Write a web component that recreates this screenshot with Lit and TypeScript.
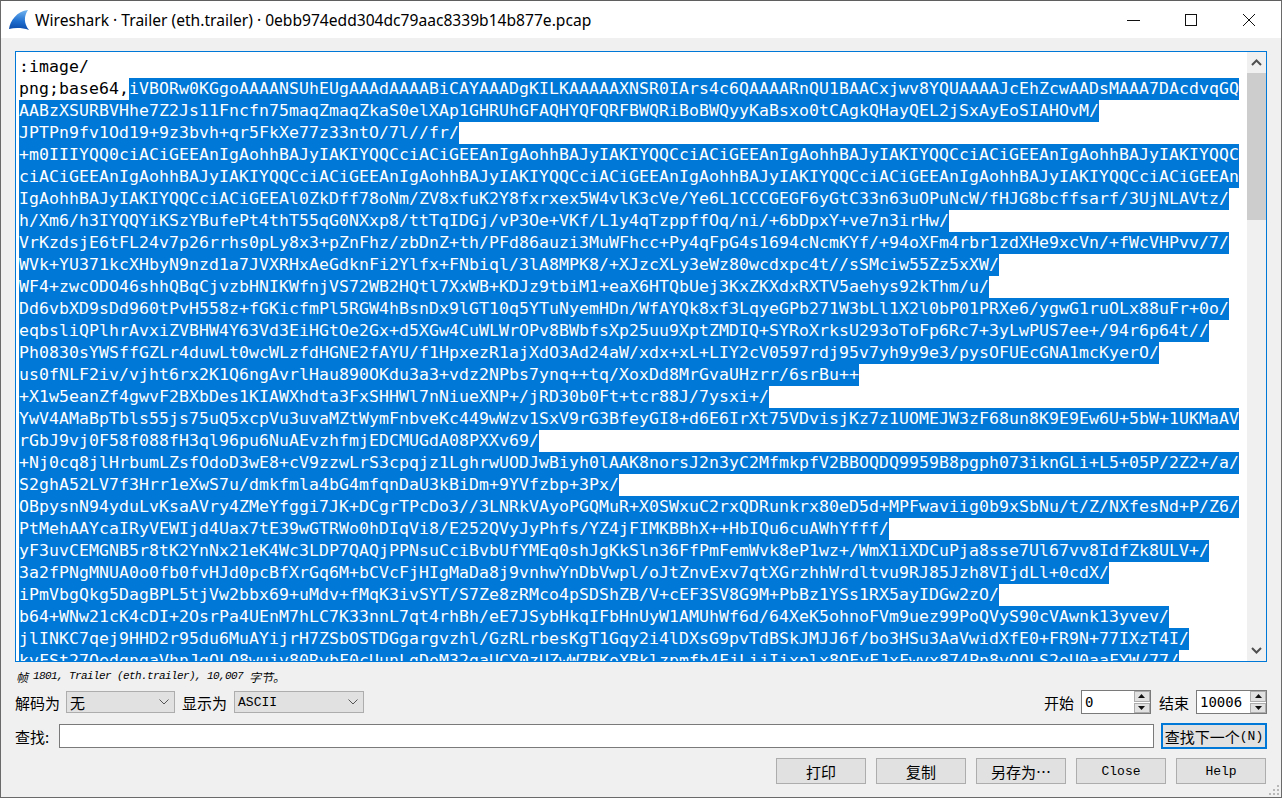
import { LitElement, html, css } from "lit";
import { customElement } from "lit/decorators.js";

const PLAIN_1 = ":image/";
const PREFIX_2 = "png;base64,";
const SELECTED = [
  "iVBORw0KGgoAAAANSUhEUgAAAdAAAABiCAYAAADgKILKAAAAAXNSR0IArs4c6QAAAARnQU1BAACxjwv8YQUAAAAJcEhZcwAADsMAAA7DAcdvqGQ",
  "AABzXSURBVHhe7Z2Js11Fncfn75maqZmaqZkaS0elXAp1GHRUhGFAQHYQFQRFBWQRiBoBWQyyKaBsxo0tCAgkQHayQEL2jSxAyEoSIAHOvM/",
  "JPTPn9fv1Od19+9z3bvh+qr5FkXe77z33ntO/7l//fr/",
  "+m0IIIYQQ0ciACiGEEAnIgAohhBAJyIAKIYQQCciACiGEEAnIgAohhBAJyIAKIYQQCciACiGEEAnIgAohhBAJyIAKIYQQCciACiGEEAnIgAohhBAJyIAKIYQQC",
  "ciACiGEEAnIgAohhBAJyIAKIYQQCciACiGEEAnIgAohhBAJyIAKIYQQCciACiGEEAnIgAohhBAJyIAKIYQQCciACiGEEAnIgAohhBAJyIAKIYQQCciACiGEEAn",
  "IgAohhBAJyIAKIYQQCciACiGEEAl0ZkDff78oNm/ZV8xfuK2Y8fxrxex5W4vlK3cVe/Ye6L1CCCGEGF6yGtC33n63uOPuNcW/fHJG8bcffsarf/3UjNLAVtz/",
  "h/Xm6/h3IYQQYiKSzYBufePt4thT55qG0NXxp8/ttTqIDGj/vP3Oe+VKf/L1y4qTzppffOq/ni/+6bDpxY+ve7n3irHw/",
  "VrKzdsjE6tFL24v7p26rrhs0pLy8x3+pZnFhz/zbDnZ+th/PFd86auzi3MuWFhcc+Py4qFpG4s1694cNcmKYf/+94oXFm4rbr1zdXHe9xcVn/+fWcVHPvv/7/",
  "WVk+YU371kcXHbyN9nzd1a7JVXRHxAeGdknFi2Ylfx+FNbiql/3lA8MPK8/+XJzcXLy3eWz80wcdxpc4t//sSMciw55Zz5xXW/",
  "WF4+zwcODO46shhQBqCjvzbHNIKWfnjVS72WB2HQtl7XxWB+KDJz9tbiM1+eaX6HTQbUej3KxZKXdxRXTV5aehys92kThm/u/",
  "Dd6vbXD9sDd960tPvH558z+fGKicfmPl5RGW4hBsnDx9lGT10q5YTuNyemHDn/WfAYQk8xf3LqyeGPb271W3bLl1X2l0bP01PRXe6/ygwG1ruOLx88uFr+0o/",
  "eqbsliQPlhrAvxiZVBHW4Y63Vd3EiHGtOe2Gx+d5XGw4CuWLWrOPv8BWbfsXp25uu9XptZMDIQ+SYRoXrksU293oToFp6Rc7+3yLwPUS7ee+/94r6p64t//",
  "Ph0830sYWSffGZLr4duwLt0wcWLzfdHGNE2fAYU/f1HpxezR1ajXdO3Ad24aW/xdx+xL+LIY2cV0597rdj95v7yh9y9e3/pysOFUEcGNA1mcKyerO/",
  "us0fNLF2iv/vjht6rx2K1Q6ngAvrlHau890OKdu3a3+vdz2NPbs7ynq++tq/XoxDd8MrGvaUHzrr/6srBu++",
  "+X1w5eanZf4gwvF2BXbDes1KIAWXhdta3FxSHHWl7nNiueXNP+/jRD30b0Ft+tcr88J/7ysxi+/",
  "YwV4AMaBpTbls55js75uQ5xcpVu3uvaMZtWymFnbveKc449wWzv1SxV9rG3BfeyGI8+d6E6IrXt75VDvisjKz7z1UOMEJW3zF68un8K9E9Ew6U+5bW+1UKMaAV",
  "rGbJ9vj0F58f088fH3ql96pu6NuAEvzhfmjEDCMUGdA08PXXv69/",
  "+Nj0cq8jlHrbumLZsfOdoD3wE8+cV9zzwLrS3cpqjz1LghrwUODJwBiyh0lAAK8norsJ2n3yC2MfmkpfV2BBOQDQ9959B8pgph073iknGLi+L5+05P/2Z2+/a/",
  "S2ghA52LV7f3Hrr1eXwS7u/dmkfmla4bG4mfqnDaU3kBiDm+9YVfzbp+3Px/",
  "OBpysnN94yduLvKsaAVry4ZMeYfggi7JK+DCgrTPcDo3//3LNRkVAyoPGQMuR+X0SWxuC2rxQDRunkrx80eD5d+MPFwaviig0b9xSbNu/t/Z/NXfesNd+P/Z6/",
  "PtMehAAYcaIRyVEWIjd4Uax7tE39wGTRWo0hDIqVi8/E252QVyJyPhfs/YZ4jFIMKBBhX++HbIQu6cuAWhYfff/",
  "yF3uvCEMGNB5r8tK2YnNx21eK4Wc3LDP7QAQjPPNsuCciBvbUfYMEq0shJgKkSln36FfPmFemWvk8eP1wz+/WmX1iXDCuPja8sse7Ul67vv8IdfZk8ULV+/",
  "3a2fPNgMNUA0o0fb0fvHJd0pcBfXrGq6M+bCVcFjHIgMaDa8j9vnhwYnDbVwpl/oJtZnvExv7qtXGrzhhWrdltvu9RJ85Jzh8VIjdLl+0cdX/",
  "iPmVbgQkg5DagBPL5tjVw2bbx69+uMdv+fMqK3ivSYT/S7Ze8zRMco4pSDShZB/V+cEF3SV8G9M+PbBz1YSs1RX5ayIDGw2zO/",
  "b64+WNw21cK4cDI+2OsrPa4UEnM7hLC7K33nnL7qt4rhBh/eE7JSybHkqIFbHnUyW1AMUhWf6d/64XeK5ohnoFVm9uez99PoQVyS90cVAwnk13yvev/",
  "jlINKC7qej9HHD2r95du6MuAYijrH7ZSbOSTDGgargvzhl/GzRLrbesKgT1Gqy2i4lDXsG9pvTdBSkJMJJ6f/bo3HSu3AaVwidXfE0+FR9N+77IXzT4I/",
  "kvFSt27OedgngaVhnJgOLO8wujv80RvbF0cUunLgDoM32gaUCY0zUZwW7BKoXBklzpmfb4FjLijIixplx8OFyFJxFwvx874Pn8vOOLS2oU0aaFYW/77/",
];

@customElement("app-root")
export class AppRoot extends LitElement {
  static styles = css`
    :host {
      display: flex;
      flex-direction: column;
      box-sizing: border-box;
      width: 1282px;
      height: 798px;
      background: #f0f0f0;
      border: 1px solid #6a6a6a;
      border-top-color: #5f5f5f;
      overflow: hidden;
      position: relative;
      font-family: "Noto Sans CJK SC", "Liberation Mono", sans-serif;
      font-size: 15px;
      color: #000;
    }
    .title {
      height: 37px;
      flex: none;
      background: #fff;
      display: flex;
      align-items: center;
    }
    .fin { width: 22px; height: 22px; margin-left: 7px; flex: none; }
    .title-text {
      margin-left: 5px;
      font: 15.6px "Noto Sans", sans-serif;
      color: #000;
      flex: 1;
      white-space: nowrap;
    }
    .win { display: flex; margin-right: 3px; }
    .win div {
      width: 58px;
      height: 37px;
      display: flex;
      align-items: center;
      justify-content: center;
    }
    .win svg { width: 14px; height: 14px; }
    .content {
      flex: 1;
      display: flex;
      flex-direction: column;
      padding: 13px 14px 0 14px;
      min-height: 0;
    }
    .text {
      height: 611px;
      flex: none;
      box-sizing: border-box;
      border: 1px solid #0078d7;
      background: #fff;
      display: flex;
    }
    .doc {
      flex: 1;
      min-width: 0;
      overflow: hidden;
      padding: 4px 0 0 3px;
      font-family: "DejaVu Sans Mono", "Liberation Mono", monospace;
      font-size: 16.5px;
      letter-spacing: 0.066px;
      line-height: 22px;
      color: #000;
    }
    .ln { height: 22px; white-space: pre; }
    .sel {
      display: inline-block;
      height: 22px;
      background: #0078d7;
      color: #fff;
    }
    .sb {
      width: 19px;
      flex: none;
      background: #f0f0f0;
      display: flex;
      flex-direction: column;
      align-items: stretch;
    }
    .sb-btn {
      height: 21px;
      flex: none;
      display: flex;
      align-items: center;
      justify-content: center;
    }
    .sb-btn svg { width: 11px; height: 7px; }
    .sb-track { flex: 1; min-height: 0; }
    .sb-thumb { height: 147px; background: #cdcdcd; }
    .status {
      height: 28px;
      flex: none;
      display: flex;
      align-items: center;
      font-style: italic;
      font-size: 12px;
      padding-left: 1px;
      white-space: pre;
    }
    .status .lat {
      font-family: "Liberation Mono", monospace;
      font-size: 11px;
      letter-spacing: -0.6px;
      margin-left: 5px;
    }
    .row { display: flex; align-items: center; flex: none; }
    .row1 { height: 24px; }
    .row2 { height: 26px; margin-top: 9px; }
    .row3 { height: 26px; margin-top: 9px; padding-right: 1px; justify-content: flex-end; gap: 10px; }
    .combo {
      box-sizing: border-box;
      height: 22px;
      background: #e1e1e1;
      border: 1px solid #adadad;
      display: flex;
      align-items: center;
      padding-left: 3px;
      justify-content: space-between;
    }
    .combo svg { width: 10px; height: 6px; margin-right: 5px; }
    .lat-ctl { font-family: "Liberation Mono", monospace; font-size: 13px; }
    .c1 { width: 109px; margin-left: 6px; }
    .c2 { width: 130px; margin-left: 7px; }
    .l2 { margin-left: 7px; }
    .spacer { flex: 1; }
    .spin {
      box-sizing: border-box;
      height: 24px;
      background: #fff;
      border: 1px solid #7a7a7a;
      display: flex;
      align-items: center;
      justify-content: space-between;
      font: 14px "DejaVu Sans Mono", monospace;
      padding-left: 3px;
      margin-left: 7px;
    }
    .s1 { width: 70px; }
    .s2 { width: 71px; margin-left: 7px; }
    .lab-end { margin-left: 8px; }
    .arrows {
      width: 16px;
      height: 22px;
      display: flex;
      flex-direction: column;
      gap: 1px;
    }
    .arrows div {
      flex: 1;
      background: #e1e1e1;
      border: 1px solid #adadad;
      box-sizing: border-box;
      display: flex;
      align-items: center;
      justify-content: center;
    }
    .arrows svg { width: 7px; height: 4px; }
    .find-lab { width: 44px; flex: none; }
    .find {
      box-sizing: border-box;
      width: 1095px;
      height: 24px;
      background: #fff;
      border: 1px solid #7a7a7a;
      flex: none;
    }
    .find-btn {
      box-sizing: border-box;
      width: 106px;
      height: 26px;
      margin-left: 7px;
      background: #e1e1e1;
      border: 2px solid #0078d7;
      display: flex;
      align-items: center;
      justify-content: center;
      white-space: nowrap;
    }
    .btn {
      box-sizing: border-box;
      width: 90px;
      height: 26px;
      background: #e1e1e1;
      border: 1px solid #adadad;
      display: flex;
      align-items: center;
      justify-content: center;
      white-space: nowrap;
    }
    .grip { position: absolute; right: 1px; bottom: 1px; width: 12px; height: 12px; }
  `;

  private chevron(up: boolean) {
    return html`<svg viewBox="0 0 11 7"><path d=${up ? "M1 6 L5.5 1.5 L10 6" : "M1 1 L5.5 5.5 L10 1"} fill="none" stroke="#505050" stroke-width="2"/></svg>`;
  }

  private tri(up: boolean) {
    return html`<svg viewBox="0 0 7 4"><path d=${up ? "M0 4 L3.5 0 L7 4 Z" : "M0 0 L3.5 4 L7 0 Z"} fill="#111"/></svg>`;
  }

  private comboArrow() {
    return html`<svg viewBox="0 0 10 6"><path d="M0.5 0.5 L5 5 L9.5 0.5" fill="none" stroke="#555" stroke-width="1"/></svg>`;
  }

  render() {
    return html`
      <div class="title">
        <svg class="fin" viewBox="0 0 22 22">
          <defs>
            <linearGradient id="g" x1="0.5" y1="0" x2="0.4" y2="1">
              <stop offset="0" stop-color="#6fb2ee"/>
              <stop offset="0.55" stop-color="#1f6fd0"/>
              <stop offset="1" stop-color="#0a49a8"/>
            </linearGradient>
          </defs>
          <path d="M1 20 C2 12 9 2 20 1 C16 7 15.5 14 21 21 C14 18.5 7 18.5 1 20 Z" fill="url(#g)"/>
        </svg>
        <div class="title-text">Wireshark · Trailer (eth.trailer) · 0ebb974edd304dc79aac8339b14b877e.pcap</div>
        <div class="win">
          <div><svg viewBox="0 0 14 14"><path d="M1 7.5H14" stroke="#111" fill="none"/></svg></div>
          <div><svg viewBox="0 0 14 14"><rect x="1.5" y="1.5" width="11" height="11" stroke="#111" fill="none"/></svg></div>
          <div><svg viewBox="0 0 14 14"><path d="M1 1L13 13M13 1L1 13" stroke="#111" fill="none"/></svg></div>
        </div>
      </div>
      <div class="content">
        <div class="text">
          <div class="doc">
            <div class="ln">${PLAIN_1}</div>
            ${SELECTED.map(
              (s, i) => html`<div class="ln">${i === 0 ? PREFIX_2 : ""}<span class="sel">${s}</span></div>`
            )}
          </div>
          <div class="sb">
            <div class="sb-btn">${this.chevron(true)}</div>
            <div class="sb-track"><div class="sb-thumb"></div></div>
            <div class="sb-btn">${this.chevron(false)}</div>
          </div>
        </div>
        <div class="status"><span>帧</span><span class="lat">1801, Trailer (eth.trailer), 10,007 </span><span>字节。</span></div>
        <div class="row row1">
          <span>解码为</span>
          <div class="combo c1"><span>无</span>${this.comboArrow()}</div>
          <span class="l2">显示为</span>
          <div class="combo c2"><span class="lat-ctl">ASCII</span>${this.comboArrow()}</div>
          <div class="spacer"></div>
          <span>开始</span>
          <div class="spin s1"><span>0</span><div class="arrows"><div>${this.tri(true)}</div><div>${this.tri(false)}</div></div></div>
          <span class="lab-end">结束</span>
          <div class="spin s2"><span>10006</span><div class="arrows"><div>${this.tri(true)}</div><div>${this.tri(false)}</div></div></div>
        </div>
        <div class="row row2">
          <span class="find-lab">查找:</span>
          <div class="find"></div>
          <div class="find-btn">查找下一个<span class="lat-ctl">(N)</span></div>
        </div>
        <div class="row row3">
          <div class="btn">打印</div>
          <div class="btn">复制</div>
          <div class="btn">另存为…</div>
          <div class="btn lat-ctl">Close</div>
          <div class="btn lat-ctl">Help</div>
        </div>
      </div>
      <svg class="grip" viewBox="0 0 12 12" fill="#b8b8b8">
        <rect x="9" y="1" width="2" height="2"/>
        <rect x="5" y="5" width="2" height="2"/><rect x="9" y="5" width="2" height="2"/>
        <rect x="1" y="9" width="2" height="2"/><rect x="5" y="9" width="2" height="2"/><rect x="9" y="9" width="2" height="2"/>
      </svg>
    `;
  }
}
